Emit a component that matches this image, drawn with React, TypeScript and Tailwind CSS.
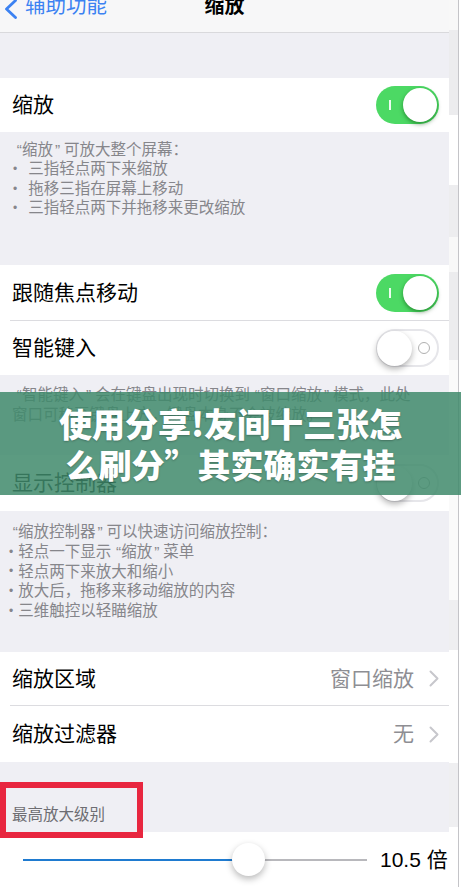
import React from "react";

function ToggleOn() {
  return (
    <div className="w-[63px] h-[38px] rounded-full bg-[#4cd964] flex items-center pl-[13px] pr-[2px]">
      <div className="w-[1.5px] h-[10px] bg-white/90" />
      <div className="ml-auto w-[34px] h-[34px] rounded-full bg-white shadow-[0_2px_4px_rgba(0,70,0,0.5)]" />
    </div>
  );
}

function ToggleOff() {
  return (
    <div className="w-[63px] h-[38px] rounded-full bg-white border-2 border-[#e6e6ea] flex items-center pr-[7px]">
      <div className="-ml-[1px] w-[35px] h-[35px] rounded-full bg-white shadow-[0_3px_6px_rgba(0,0,0,0.3)]" />
      <div className="ml-auto w-[12px] h-[12px] rounded-full border-[1.5px] border-[#b0b0b0]" />
    </div>
  );
}

function Chevron() {
  return (
    <svg width="10" height="17" viewBox="0 0 10 17" className="ml-[15px] shrink-0">
      <polyline points="1.5,1.5 8.5,8.5 1.5,15.5" fill="none" stroke="#c7c7cc" strokeWidth="2" strokeLinecap="round" strokeLinejoin="round" />
    </svg>
  );
}

function Lq() {
  return <span className="inline-block w-[10px] text-right">“</span>;
}
function Rq() {
  return <span className="inline-block w-[11px] text-left pl-[2px]">”</span>;
}

function Bullet({ children, gap }: { children: React.ReactNode; gap: string }) {
  return (
    <div className="flex items-center">
      <span className="text-[12px] leading-none pl-[1px]">•</span>
      <span className={gap}>{children}</span>
    </div>
  );
}

export default function App() {
  return (
    <div className="relative w-[461px] h-[887px] overflow-hidden flex font-['Liberation_Sans','Noto_Sans_CJK_SC',sans-serif]">
      {/* main screen */}
      <div className="w-[449px] h-[887px] bg-[#efeff4] flex flex-col shrink-0">
        {/* nav bar */}
        <div className="h-[33px] shrink-0 bg-[#f7f7f8] border-b border-[#d9d9dc] grid grid-cols-[1fr_auto_1fr] items-start">
          <div className="flex items-start">
            <svg width="16" height="20" viewBox="0 0 16 20" className="ml-[2px] shrink-0">
              <polyline points="13.5,0.5 4.5,9 13.5,17.5" fill="none" stroke="#3c82f2" strokeWidth="2.8" strokeLinecap="round" strokeLinejoin="round" />
            </svg>
            <span className="ml-[7px] -mt-[4px] text-[20.5px] leading-[20px] text-[#3c82f2]">辅助功能</span>
          </div>
          <span className="-mt-[4px] text-[20px] leading-[20px] font-semibold text-black">缩放</span>
          <div />
        </div>

        <div className="h-[45px] shrink-0" />

        {/* zoom row */}
        <div className="h-[54px] shrink-0 bg-white flex items-center pl-3 pr-[10px] text-[21px] text-black">
          <span>缩放</span>
          <div className="ml-auto"><ToggleOn /></div>
        </div>

        {/* footer 1 */}
        <div className="h-[133px] shrink-0 pl-3 pt-[8px] text-[15.5px] leading-[19.4px] text-[#86868b]">
          <div><Lq />缩放<Rq />可放大整个屏幕：</div>
          <Bullet gap="ml-[11px]">三指轻点两下来缩放</Bullet>
          <Bullet gap="ml-[11px]">拖移三指在屏幕上移动</Bullet>
          <Bullet gap="ml-[11px]">三指轻点两下并拖移来更改缩放</Bullet>
        </div>

        {/* group 2 */}
        <div className="shrink-0 bg-white text-[21px] text-black">
          <div className="h-[55px] flex items-center pl-3 pr-[10px]">
            <span>跟随焦点移动</span>
            <div className="ml-auto"><ToggleOn /></div>
          </div>
          <div className="h-px ml-[10px] bg-[#dcdce0]" />
          <div className="h-[54px] flex items-center pl-3 pr-[10px]">
            <span>智能键入</span>
            <div className="ml-auto"><ToggleOff /></div>
          </div>
        </div>

        {/* footer 2 */}
        <div className="h-[80px] shrink-0 pl-3 pr-3 pt-[10px] text-[15.5px] leading-[20px] text-[#86868b]">
          <div className="whitespace-nowrap"><Lq />智能键入<Rq />会在键盘出现时切换到<Lq />窗口缩放<Rq />模式，此处</div>
          <div className="whitespace-nowrap">窗口可移至键盘上方，键盘本身不会被缩放。</div>
        </div>

        {/* controller row */}
        <div className="h-[56px] shrink-0 bg-white flex items-center pl-3 pr-[10px] text-[21px] text-black">
          <span>显示控制器</span>
          <div className="ml-auto"><ToggleOff /></div>
        </div>

        {/* footer 3 */}
        <div className="h-[141px] shrink-0 pl-[8px] pt-[11px] text-[15.5px] leading-[19.75px] text-[#86868b]">
          <div><Lq />缩放控制器<Rq />可以快速访问缩放控制：</div>
          <Bullet gap="ml-[5px]"><>轻点一下显示<Lq />缩放<Rq />菜单</></Bullet>
          <Bullet gap="ml-[5px]">轻点两下来放大和缩小</Bullet>
          <Bullet gap="ml-[5px]">放大后，拖移来移动缩放的内容</Bullet>
          <Bullet gap="ml-[5px]">三维触控以轻瞄缩放</Bullet>
        </div>

        {/* group 4 */}
        <div className="shrink-0 bg-white text-[21px] text-black">
          <div className="h-[53px] flex items-center pl-3 pr-[10px]">
            <span>缩放区域</span>
            <span className="ml-auto text-[#8e8e93]">窗口缩放</span>
            <Chevron />
          </div>
          <div className="h-px ml-[10px] bg-[#dcdce0]" />
          <div className="h-[56px] flex items-center pl-3 pr-[10px]">
            <span>缩放过滤器</span>
            <span className="ml-auto text-[#8e8e93]">无</span>
            <Chevron />
          </div>
        </div>

        {/* header with red annotation */}
        <div className="relative z-10 h-[70px] shrink-0 pl-3 pt-[43px] text-[15.5px] leading-[20px] text-[#6d6d72]">
          最高放大级别
          <div className="absolute left-0 top-[20px] w-[143px] h-[56px] border-[6px] border-[#e8263f]" />
        </div>

        {/* slider row */}
        <div className="h-[55px] shrink-0 bg-white flex items-center pl-[23px]">
          <div className="relative w-[344px] h-[2px] bg-[#b8b8bc]">
            <div className="h-[2px] w-[210px] bg-[#1f7bd0]" />
            <div className="absolute left-[209px] -top-[16px] w-[33px] h-[33px] rounded-full bg-white shadow-[0_3px_7px_rgba(0,0,0,0.28)]" />
          </div>
          <span className="ml-[13px] text-[21px] text-black">10.5 倍</span>
        </div>
      </div>

      {/* right edge strip */}
      <div className="w-[12px] h-[887px] flex shrink-0">
        <div className="w-[9px] flex flex-col">
          <div className="h-[30px] bg-[#f8f8f8]" />
          <div className="h-[85px] bg-[#ececee]" />
          <div className="h-[70px] bg-white" />
          <div className="h-[52px] bg-[#ededef]" />
          <div className="h-[35px] bg-[#f8f8f8]" />
          <div className="h-[88px] bg-[#ececee]" />
          <div className="h-[240px] bg-[#fafafa]" />
          <div className="h-[50px] bg-[#efeff1]" />
          <div className="h-[113px] bg-white" />
          <div className="h-[64px] bg-[#efeff1]" />
          <div className="h-[60px] bg-white" />
        </div>
        <div className="w-px bg-[#c4c4c8]" />
        <div className="w-[2px] bg-white" />
      </div>

      {/* green title banner overlay */}
      <div className="absolute left-0 top-[392px] w-[461px] h-[103px] bg-[#3f8a6b]/85 flex flex-col items-center justify-center font-['Noto_Sans_CJK_SC',sans-serif] font-black text-white text-[33px] leading-[41px] [text-shadow:0_1px_2px_rgba(0,0,0,0.25)]">
        <div className="whitespace-nowrap">使用分享!友间十三张怎</div>
        <div className="whitespace-nowrap">么刷分”其实确实有挂</div>
      </div>
    </div>
  );
}
